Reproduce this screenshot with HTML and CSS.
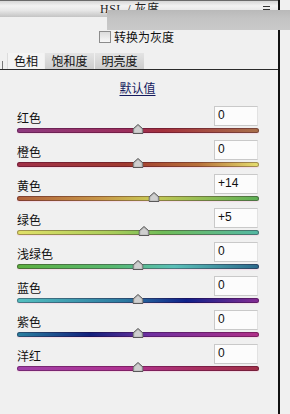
FILE: index.html
```html
<!DOCTYPE html>
<html lang="zh">
<head>
<meta charset="utf-8">
<link rel="stylesheet" href="styles.css">
</head>
<body>
<div class="window">
  <div class="main">
    <div class="header">
      <span class="title">HSL / 灰度</span>
      <span class="menu"><i></i><i></i><i></i></span>
    </div>
    <div class="check-row"><span class="checkbox"></span><span class="check-label">转换为灰度</span></div>
    <div class="tabs">
      <span class="tick"></span>
      <span class="tab active">色相</span>
      <span class="tab">饱和度</span>
      <span class="tab">明亮度</span>
    </div>
    <div class="default"><span class="link">默认值</span></div>
    <div class="rows">
      <div class="row">
        <div class="top"><span class="label">红色</span><span class="input">0</span></div>
        <div class="track t-red"><span class="thumb" style="left:50%"><svg width="11" height="10" viewBox="0 0 11 10"><path d="M5.5 0.5 L10.5 5 L10.5 9.5 L0.5 9.5 L0.5 5 Z" fill="#b4b4b4" stroke="#5a5a5a"/><path d="M5.5 2 L9 5.3 L9 8.5 L2 8.5 L2 5.3 Z" fill="#cfcfcf"/></svg></span></div>
      </div>
      <div class="row">
        <div class="top"><span class="label">橙色</span><span class="input">0</span></div>
        <div class="track t-orange"><span class="thumb" style="left:50%"><svg width="11" height="10" viewBox="0 0 11 10"><path d="M5.5 0.5 L10.5 5 L10.5 9.5 L0.5 9.5 L0.5 5 Z" fill="#b4b4b4" stroke="#5a5a5a"/><path d="M5.5 2 L9 5.3 L9 8.5 L2 8.5 L2 5.3 Z" fill="#cfcfcf"/></svg></span></div>
      </div>
      <div class="row">
        <div class="top"><span class="label">黄色</span><span class="input">+14</span></div>
        <div class="track t-yellow"><span class="thumb" style="left:56.6%"><svg width="11" height="10" viewBox="0 0 11 10"><path d="M5.5 0.5 L10.5 5 L10.5 9.5 L0.5 9.5 L0.5 5 Z" fill="#b4b4b4" stroke="#5a5a5a"/><path d="M5.5 2 L9 5.3 L9 8.5 L2 8.5 L2 5.3 Z" fill="#cfcfcf"/></svg></span></div>
      </div>
      <div class="row">
        <div class="top"><span class="label">绿色</span><span class="input">+5</span></div>
        <div class="track t-green"><span class="thumb" style="left:52.5%"><svg width="11" height="10" viewBox="0 0 11 10"><path d="M5.5 0.5 L10.5 5 L10.5 9.5 L0.5 9.5 L0.5 5 Z" fill="#b4b4b4" stroke="#5a5a5a"/><path d="M5.5 2 L9 5.3 L9 8.5 L2 8.5 L2 5.3 Z" fill="#cfcfcf"/></svg></span></div>
      </div>
      <div class="row">
        <div class="top"><span class="label">浅绿色</span><span class="input">0</span></div>
        <div class="track t-aqua"><span class="thumb" style="left:50%"><svg width="11" height="10" viewBox="0 0 11 10"><path d="M5.5 0.5 L10.5 5 L10.5 9.5 L0.5 9.5 L0.5 5 Z" fill="#b4b4b4" stroke="#5a5a5a"/><path d="M5.5 2 L9 5.3 L9 8.5 L2 8.5 L2 5.3 Z" fill="#cfcfcf"/></svg></span></div>
      </div>
      <div class="row">
        <div class="top"><span class="label">蓝色</span><span class="input">0</span></div>
        <div class="track t-blue"><span class="thumb" style="left:50%"><svg width="11" height="10" viewBox="0 0 11 10"><path d="M5.5 0.5 L10.5 5 L10.5 9.5 L0.5 9.5 L0.5 5 Z" fill="#b4b4b4" stroke="#5a5a5a"/><path d="M5.5 2 L9 5.3 L9 8.5 L2 8.5 L2 5.3 Z" fill="#cfcfcf"/></svg></span></div>
      </div>
      <div class="row">
        <div class="top"><span class="label">紫色</span><span class="input">0</span></div>
        <div class="track t-purple"><span class="thumb" style="left:50%"><svg width="11" height="10" viewBox="0 0 11 10"><path d="M5.5 0.5 L10.5 5 L10.5 9.5 L0.5 9.5 L0.5 5 Z" fill="#b4b4b4" stroke="#5a5a5a"/><path d="M5.5 2 L9 5.3 L9 8.5 L2 8.5 L2 5.3 Z" fill="#cfcfcf"/></svg></span></div>
      </div>
      <div class="row">
        <div class="top"><span class="label">洋红</span><span class="input">0</span></div>
        <div class="track t-magenta"><span class="thumb" style="left:50%"><svg width="11" height="10" viewBox="0 0 11 10"><path d="M5.5 0.5 L10.5 5 L10.5 9.5 L0.5 9.5 L0.5 5 Z" fill="#b4b4b4" stroke="#5a5a5a"/><path d="M5.5 2 L9 5.3 L9 8.5 L2 8.5 L2 5.3 Z" fill="#cfcfcf"/></svg></span></div>
      </div>
    </div>
  </div>
  <div class="vline"></div>
  <div class="side"></div>
  <div class="band"></div>
</div>
</body>
</html>
```
FILE: styles.css
```css
html, body {
  margin: 0;
  padding: 0;
  background: #f0f0f0;
  overflow: hidden;
}
.window {
  position: relative;
  display: flex;
  width: 290px;
  height: 414px;
  background: #f0f0f0;
  font-family: "Noto Sans CJK SC", "Liberation Sans", sans-serif;
  font-size: 12px;
  color: #111;
}
.main {
  width: 278px;
  display: flex;
  flex-direction: column;
}
.vline {
  width: 2px;
  background: #111;
}
.side {
  flex: 1;
  background: #f0f0f0;
}
.header {
  height: 16px;
  border-top: 1px solid #6a6a6a;
  background: linear-gradient(#d6d6d6, #f2f2f2 30%, #e6e6e6 60%, #c4c4c4);
  display: flex;
  align-items: center;
  position: relative;
}
.title {
  padding-left: 100px;
  font-family: "Liberation Serif", "Noto Sans CJK SC", serif;
  font-size: 12px;
  line-height: 14px;
  color: #222;
  letter-spacing: 0.5px;
}
.menu {
  margin-left: auto;
  margin-right: 8px;
  display: flex;
  flex-direction: column;
  gap: 2px;
  width: 7px;
}
.menu i {
  display: block;
  height: 1px;
  background: #333;
}
.band {
  position: absolute;
  left: 107px;
  top: 10px;
  width: 183px;
  height: 20px;
  background: linear-gradient(#b9b9b9, #c3c3c3 40%, #c9c9c9);
}
.check-row {
  margin-top: 13px;
  height: 14px;
  padding-left: 99px;
  display: flex;
  align-items: center;
  gap: 3px;
}
.checkbox {
  width: 10px;
  height: 10px;
  border: 1px solid #8c8c8c;
  background: linear-gradient(#dcdcdc, #f8f8f8);
}
.check-label {
  font-size: 12px;
  line-height: 14px;
}
.tabs {
  margin-top: 9px;
  height: 16px;
  border-bottom: 1px solid #2a2a2a;
  display: flex;
  align-items: stretch;
}
.tick {
  width: 1px;
  margin-left: 2px;
  margin-top: 8px;
  background: #777;
}
.tab {
  font-size: 12px;
  line-height: 16px;
  text-align: center;
  background: linear-gradient(#e4e4e4, #cdcdcd);
  width: 49px;
  margin-left: 1px;
}
.tab.active {
  width: 36px;
  margin-left: 4px;
  background: #f4f4f4;
  border-left: 1px solid #dcdcdc;
}
.default {
  margin-top: 11px;
  text-align: center;
  padding-right: 3px;
  line-height: 14px;
}
.link {
  color: #141a5e;
  text-decoration: underline;
  text-underline-offset: 2px;
  font-size: 12px;
}
.rows {
  margin-top: 10px;
  padding-left: 17px;
  padding-right: 19px;
  display: flex;
  flex-direction: column;
}
.row {
  height: 34px;
  display: flex;
  flex-direction: column;
}
.top {
  height: 21px;
  display: flex;
  justify-content: space-between;
}
.label {
  align-self: flex-end;
  font-size: 12px;
  line-height: 14px;
  margin-bottom: 1px;
}
.input {
  margin-top: 1px;
  width: 44px;
  height: 20px;
  box-sizing: border-box;
  border: 1px solid #c9c9c9;
  border-right-color: #e2e2e2;
  background: #fcfcfc;
  font-family: "Liberation Sans", sans-serif;
  font-size: 12px;
  line-height: 17px;
  padding-left: 3px;
  margin-right: 1px;
}
.track {
  position: relative;
  margin-top: 2px;
  height: 5px;
  border-radius: 3px;
  box-shadow: inset 0 0 0 1px rgba(40, 0, 30, 0.35), 0 1px 1px rgba(255, 150, 200, 0.25);
}
.thumb {
  position: absolute;
  top: -4px;
  transform: translateX(-50%);
  display: block;
  width: 11px;
  height: 10px;
  line-height: 0;
}
.t-red { background: linear-gradient(90deg, #8e3a80, #9c2e5c 45%, #a4303c 60%, #a8704a); }
.t-orange { background: linear-gradient(90deg, #a03048, #a03a30 45%, #b8703a 75%, #e6e070); }
.t-yellow { background: linear-gradient(90deg, #b0603a, #c89848 35%, #c8c854 55%, #8cbc54 80%, #5cb056); }
.t-green { background: linear-gradient(90deg, #e2e068, #a8cc5a 40%, #70bc58 60%, #54b8a4); }
.t-aqua { background: linear-gradient(90deg, #5cb040, #58b870 40%, #5ac0b8 65%, #2c6a8c); }
.t-blue { background: linear-gradient(90deg, #54c0c0, #2c78a0 45%, #10208a 70%, #842c94); }
.t-purple { background: linear-gradient(90deg, #2a80a0, #12207c 30%, #7030a0 55%, #b03088); }
.t-magenta { background: linear-gradient(90deg, #a040a8, #b03290 45%, #a83060 75%, #a03048); }
```
